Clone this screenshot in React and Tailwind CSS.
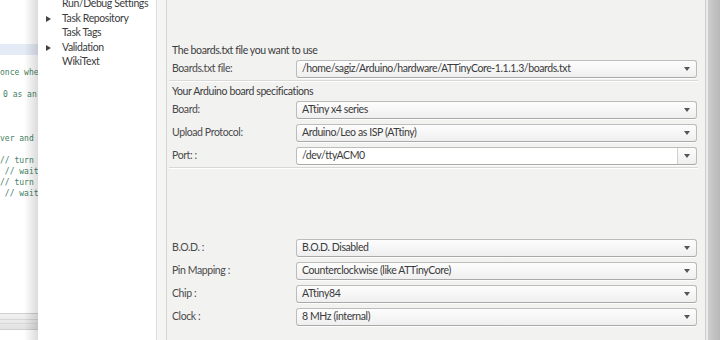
import React from "react";

const font = { fontFamily: "Lato, 'Noto Sans', sans-serif" };

function Combo({ text, editable }) {
  return (
    <div className="w-[401px] h-[18px] shrink-0 rounded-[3px] border border-[#bcbcbc] border-b-[#a9a9a9] bg-gradient-to-b from-[#fdfdfd] to-[#efefef] flex items-center shadow-[0_1px_0_rgba(255,255,255,0.8)]">
      <div className={"flex-1 h-full flex items-center pl-[5px] text-[10.5px] tracking-[-0.4px] text-[#3a3a3a] " + (editable ? "bg-white rounded-l-[3px] border-r border-[#cfcfcf]" : "")}>
        {text}
      </div>
      <div className="w-[18px] h-full flex items-center justify-center">
        <div className="w-0 h-0 border-l-[3px] border-r-[3px] border-t-[4px] border-l-transparent border-r-transparent border-t-[#555]" />
      </div>
    </div>
  );
}

function Row({ label, text, editable, className = "" }) {
  return (
    <div className={"flex items-center h-[18px] " + className}>
      <div className="w-[124px] shrink-0 text-[10.5px] tracking-[-0.4px] text-[#4a4a4a] whitespace-nowrap">{label}</div>
      <Combo text={text} editable={editable} />
    </div>
  );
}

function Sep({ className = "" }) {
  return <div className={"h-[2px] border-t border-[#d9d9d7] border-b border-b-white " + className} />;
}

function TreeItem({ label, arrow }) {
  return (
    <div className="h-[14.5px] flex items-center text-[10.5px] tracking-[-0.4px] text-[#3c3c3c] whitespace-nowrap">
      <div className="w-[24px] shrink-0 flex items-center pl-[8px]">
        {arrow && (
          <div className="w-0 h-0 border-t-[3.5px] border-b-[3.5px] border-l-[5px] border-t-transparent border-b-transparent border-l-[#444]" />
        )}
      </div>
      {label}
    </div>
  );
}

function CodeLine({ text, pl = 0 }) {
  return (
    <div className="h-[11px] leading-[11px] whitespace-pre text-[8px] text-[#3f7f5f]" style={{ paddingLeft: pl }}>
      {text}
    </div>
  );
}

export default function App() {
  return (
    <div className="w-[720px] h-[340px] flex overflow-hidden bg-white" style={font}>
      {/* code editor strip */}
      <div className="w-[38px] shrink-0 h-full relative bg-white overflow-hidden flex flex-col" style={{ fontFamily: "'DejaVu Sans Mono', monospace" }}>
        <div className="h-[44px]" />
        <div className="h-[11px] bg-[#e5ebf6]" />
        <div className="h-[12px]" />
        <CodeLine text="once when" />
        <div className="h-[11px]" />
        <CodeLine text="0 as an" pl={3} />
        <div className="h-[33px]" />
        <CodeLine text="ver and" pl={-1} />
        <div className="h-[11px]" />
        <CodeLine text="// turn" pl={-5} />
        <CodeLine text=" // wait" pl={-2} />
        <CodeLine text="// turn" pl={-5} />
        <CodeLine text=" // wait" pl={-2} />
        <div className="flex-1" />
        <div className="h-[17px] border-t border-b border-[#cfcfcf] bg-gradient-to-b from-[#f1f1f1] to-[#e2e2e2] flex flex-col justify-center gap-[3px]">
          <div className="h-px bg-[#d6d6d6]" />
          <div className="h-px bg-[#dadada]" />
        </div>
        <div className="h-[10px]" />
        <div className="absolute inset-y-0 right-0 w-[14px] bg-gradient-to-r from-transparent to-[rgba(0,0,0,0.14)]" />
      </div>

      {/* tree */}
      <div className="w-[119px] shrink-0 h-full bg-white border-r border-[#dedede] flex flex-col">
        <div className="-mt-[3px]" />
        <TreeItem label="Run/Debug Settings" />
        <TreeItem label="Task Repository" arrow />
        <TreeItem label="Task Tags" />
        <TreeItem label="Validation" arrow />
        <TreeItem label="WikiText" />
      </div>

      {/* sash */}
      <div className="w-[10px] shrink-0 h-full bg-[#f5f5f4] border-r border-[#d6d6d4]" />

      {/* main panel */}
      <div className="flex-1 h-full bg-[#f2f2f1] pl-[5px] pt-[44px] flex flex-col">
        <div className="h-[14px] flex items-center text-[10.5px] tracking-[-0.4px] text-[#3c3c3c]">The boards.txt file you want to use</div>
        <Row className="mt-[2px]" label="Boards.txt file:" text="/home/sagiz/Arduino/hardware/ATTinyCore-1.1.1.3/boards.txt" />
        <Sep className="mt-[2px] -ml-[3px] w-[529px]" />
        <div className="h-[14px] mt-[3px] flex items-center text-[10.5px] tracking-[-0.4px] text-[#3c3c3c]">Your Arduino board specifications</div>
        <Row className="mt-[2px]" label="Board:" text="ATtiny x4 series" />
        <Row className="mt-[5px]" label="Upload Protocol:" text="Arduino/Leo as ISP (ATtiny)" />
        <Row className="mt-[5px]" label="Port: :" text="/dev/ttyACM0" editable />
        <Sep className="mt-[2px] -ml-[3px] w-[529px]" />
        <Row className="mt-[70px]" label="B.O.D. :" text="B.O.D. Disabled" />
        <Row className="mt-[5px]" label="Pin Mapping :" text="Counterclockwise (like ATTinyCore)" />
        <Row className="mt-[5px]" label="Chip :" text="ATtiny84" />
        <Row className="mt-[5px]" label="Clock :" text="8 MHz (internal)" />
      </div>

      {/* right window edge */}
      <div className="w-[15px] shrink-0 h-full flex border-l border-[#cdcdcd]">
        <div className="w-[2px] bg-[#ebebeb]" />
        <div className="flex-1 bg-gradient-to-r from-[#cfcfcf] via-[#c2c2c2] to-[#b9b9b9]" />
      </div>
    </div>
  );
}
